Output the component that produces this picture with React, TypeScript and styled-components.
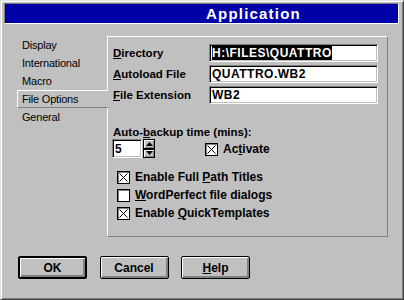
import React from 'react';
import styled, { createGlobalStyle } from 'styled-components';

const GlobalStyle = createGlobalStyle`
  html, body {
    margin: 0;
    padding: 0;
    background: #c0c0c0;
  }
  * {
    box-sizing: border-box;
  }
`;

const Window = styled.div`
  width: 404px;
  height: 300px;
  background: #c0c0c0;
  border: 1px solid;
  border-color: #dfdfdf #404040 #404040 #dfdfdf;
  box-shadow: inset 1px 1px #ffffff, inset -1px -1px #808080;
  padding: 2px 4px 0 3px;
  font-family: 'Liberation Sans', Arial, sans-serif;
  color: #000;
`;

const TitleBar = styled.div`
  height: 21px;
  background: #0000a8;
  border-top: 1px solid #808080;
  border-left: 1px solid #808080;
  border-right: 1px solid #ffffff;
  border-bottom: 1px solid #ffffff;
  color: #fff;
  font-weight: bold;
  font-size: 15px;
  letter-spacing: 1.2px;
  line-height: 19px;
  padding-left: 201px;
`;

const Body = styled.div`
  display: flex;
  padding: 12px 0 0 13px;
`;

const Sidebar = styled.ul`
  list-style: none;
  margin: 0 -1px 0 0;
  padding: 0;
  width: 91px;
  position: relative;
  z-index: 1;
`;

const Tab = styled.li<{ $active?: boolean }>`
  height: 18px;
  line-height: 16px;
  padding-left: 4px;
  font-size: 11px;
  letter-spacing: -0.2px;
  white-space: nowrap;
  border: 1px solid transparent;
  border-right: none;
  background: ${(p) => (p.$active ? '#c0c0c0' : 'transparent')};
  border-color: ${(p) =>
    p.$active ? '#ffffff transparent #808080 #ffffff' : 'transparent'};
`;

const Panel = styled.div`
  width: 281px;
  height: 201px;
  border: 1px solid;
  border-color: #ffffff #808080 #808080 #ffffff;
  padding: 7px 9px 0 5px;
`;

const FieldGrid = styled.div`
  display: grid;
  grid-template-columns: 96px 169px;
  row-gap: 3px;
  align-items: center;
`;

const Label = styled.label`
  font-weight: bold;
  font-size: 11.5px;
  white-space: nowrap;
`;

const TextField = styled.div`
  height: 18px;
  background: #fff;
  border: 1px solid;
  border-color: #808080 #ffffff #ffffff #808080;
  box-shadow: inset 1px 1px #000, inset -1px -1px #c0c0c0;
  padding: 1px 0 0 2px;
  font-weight: bold;
  font-size: 12px;
  letter-spacing: 0.5px;
  line-height: 14px;
  white-space: nowrap;
  overflow: hidden;
`;

const Selected = styled.span`
  background: #000;
  color: #fff;
`;

const BackupLabel = styled(Label)`
  display: block;
  margin-top: 21px;
  line-height: 14px;
`;

const SpinRow = styled.div`
  display: flex;
  align-items: flex-end;
  margin-left: -1px;
`;

const SpinField = styled(TextField)`
  width: 30px;
  height: 19px;
  padding-top: 2px;
`;

const SpinButtons = styled.div`
  display: flex;
  flex-direction: column;
  margin-left: 1px;
`;

const SpinButton = styled.div`
  width: 12px;
  height: 9.5px;
  border: 1px solid #000;
  background: #c0c0c0;
  box-shadow: inset 1px 1px #fff, inset -1px -1px #808080;
  display: flex;
  align-items: center;
  justify-content: center;
`;

const CheckRow = styled.div<{ $offset?: number }>`
  display: flex;
  align-items: center;
  gap: 5px;
  height: 18px;
  margin-left: ${(p) => p.$offset ?? 0}px;
  font-weight: bold;
  font-size: 12px;
  white-space: nowrap;
`;

const Box = styled.span`
  width: 13px;
  height: 13px;
  flex: none;
  background: #fff;
  border: 1px solid #000;
  box-shadow: inset 1px 1px #808080;
  display: flex;
  align-items: center;
  justify-content: center;
`;

const CheckList = styled.div`
  display: flex;
  flex-direction: column;
  margin: 10px 0 0 4px;
`;

const Footer = styled.div`
  display: flex;
  gap: 12.5px;
  padding: 19px 0 0 14px;
`;

const Button = styled.button<{ $default?: boolean }>`
  width: 69px;
  height: 23px;
  padding: 0;
  background: #c0c0c0;
  border: ${(p) => (p.$default ? '2px' : '1px')} solid #000;
  border-radius: 2px;
  box-shadow: inset 1px 1px #fff, inset -2px -2px #808080;
  font-family: 'Liberation Sans', Arial, sans-serif;
  font-weight: bold;
  font-size: 12px;
  color: #000;
`;

const Check = ({ checked }: { checked?: boolean }) => (
  <Box>
    {checked && (
      <svg width="9" height="9" viewBox="0 0 9 9">
        <path d="M0.5 0.5 L8.5 8.5 M8.5 0.5 L0.5 8.5" stroke="#000" strokeWidth="1" />
      </svg>
    )}
  </Box>
);

const Arrow = ({ up }: { up?: boolean }) => (
  <svg width="7" height="4" viewBox="0 0 7 4">
    <path d={up ? 'M3.5 0 L7 4 L0 4 Z' : 'M0 0 L7 0 L3.5 4 Z'} fill="#000" />
  </svg>
);

const tabs = ['Display', 'International', 'Macro', 'File Options', 'General'];

export default function App() {
  return (
    <>
      <GlobalStyle />
      <Window>
        <TitleBar>Application</TitleBar>
        <Body>
          <Sidebar>
            {tabs.map((t) => (
              <Tab key={t} $active={t === 'File Options'}>
                {t}
              </Tab>
            ))}
          </Sidebar>
          <Panel>
            <FieldGrid>
              <Label><u>D</u>irectory</Label>
              <TextField><Selected>H:\FILES\QUATTRO</Selected></TextField>
              <Label><u>A</u>utoload File</Label>
              <TextField>QUATTRO.WB2</TextField>
              <Label><u>F</u>ile Extension</Label>
              <TextField>WB2</TextField>
            </FieldGrid>
            <BackupLabel>Auto-<u>b</u>ackup time (mins):</BackupLabel>
            <SpinRow>
              <SpinField>5</SpinField>
              <SpinButtons>
                <SpinButton><Arrow up /></SpinButton>
                <SpinButton><Arrow /></SpinButton>
              </SpinButtons>
              <CheckRow $offset={50}>
                <Check checked />
                <span>Ac<u>t</u>ivate</span>
              </CheckRow>
            </SpinRow>
            <CheckList>
              <CheckRow>
                <Check checked />
                <span>Enable Full <u>P</u>ath Titles</span>
              </CheckRow>
              <CheckRow>
                <Check />
                <span><u>W</u>ordPerfect file dialogs</span>
              </CheckRow>
              <CheckRow>
                <Check checked />
                <span>Enable <u>Q</u>uickTemplates</span>
              </CheckRow>
            </CheckList>
          </Panel>
        </Body>
        <Footer>
          <Button $default>OK</Button>
          <Button>Cancel</Button>
          <Button><u>H</u>elp</Button>
        </Footer>
      </Window>
    </>
  );
}
